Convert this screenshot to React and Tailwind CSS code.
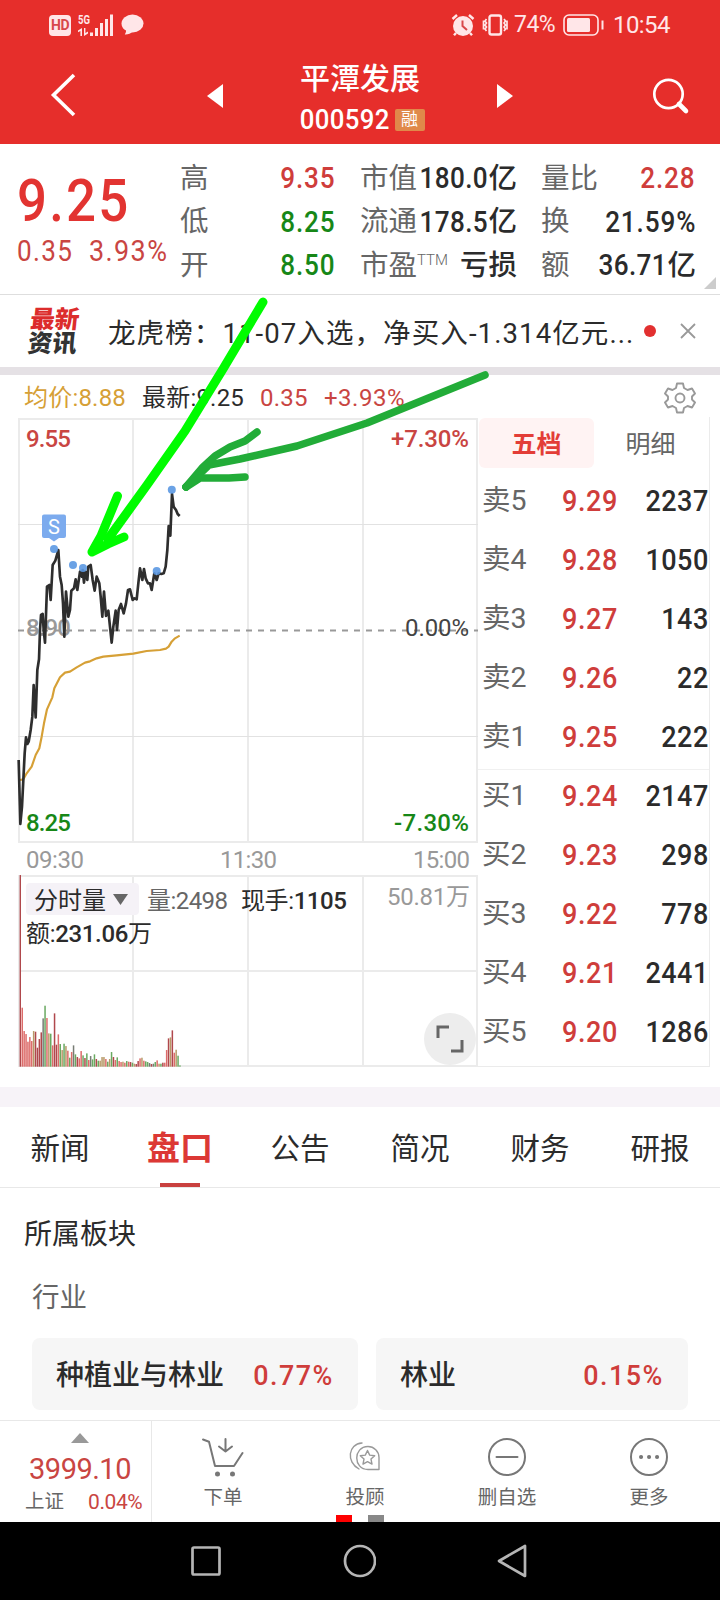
import React from "react";

const stats = [
  [
    { label: "高", value: "9.35", color: "text-[#cf3d3b]" },
    { label: "低", value: "8.25", color: "text-[#178717]" },
    { label: "开", value: "8.50", color: "text-[#178717]" },
  ],
  [
    { label: "市值", value: "180.0", unit: "亿", color: "text-[#2b2b2b]" },
    { label: "流通", value: "178.5", unit: "亿", color: "text-[#2b2b2b]" },
    { label: "市盈", sup: "TTM", unit: "亏损", color: "text-[#2b2b2b]" },
  ],
  [
    { label: "量比", value: "2.28", color: "text-[#cf3d3b]" },
    { label: "换", value: "21.59%", color: "text-[#2b2b2b]" },
    { label: "额", value: "36.71", unit: "亿", color: "text-[#2b2b2b]" },
  ],
];

const statWidths = ["w-[156px]", "w-[157px]", "w-[155px]"];

const orders = [
  ["卖5", "9.29", "2237"],
  ["卖4", "9.28", "1050"],
  ["卖3", "9.27", "143"],
  ["卖2", "9.26", "22"],
  ["卖1", "9.25", "222"],
  ["买1", "9.24", "2147"],
  ["买2", "9.23", "298"],
  ["买3", "9.22", "778"],
  ["买4", "9.21", "2441"],
  ["买5", "9.20", "1286"],
];

const tabs = ["新闻", "盘口", "公告", "简况", "财务", "研报"];

// chart data is kept at 3x, see the scale on the group that draws it
const pricePoints =
  "56,1170 61,1362 66,1310 70,1230 74,1150 78,1102 82,1122 86,1115 92,1080 97,1040 101,945 107,1042 112,900 117,868 120,780 123,735 128,732 131,780 135,818 141,650 148,645 152,690 158,585 166,572 175,540 180,620 185,645 189,700 193,800 198,665 205,740 210,720 214,662 222,655 227,628 232,660 240,605 246,620 248,600 252,638 256,605 262,630 265,590 272,585 278,630 284,662 290,620 298,640 302,680 307,740 312,665 318,738 325,722 330,770 335,818 340,770 347,722 351,780 356,720 363,702 371,730 378,700 384,660 390,658 398,690 404,685 410,688 415,640 420,595 427,630 432,597 437,625 444,640 450,640 455,660 463,610 470,630 476,610 484,612 491,610 497,590 502,540 506,468 511,497 516,372 521,410 528,420 533,432 539,438";

const avgPoints =
  "60,1230 70,1228 80,1210 95,1190 107,1155 118,1135 125,1100 132,1060 141,1018 157,982 163,955 180,922 195,908 210,905 230,892 255,878 270,874 290,865 310,860 350,856 400,851 440,843 480,840 498,836 506,830 515,815 525,805 539,797";

const dots = [[54, 549], [73, 565], [83, 568], [156.7, 571], [171.8, 489.7]];

const volumes = [
  575, 177, 107, 98, 75, 89, 77, 107, 105, 57, 83, 103, 145, 183, 146, 100, 99, 64, 160, 66, 97, 68, 50, 69, 62, 48, 27,
  44, 64, 37, 29, 25, 47, 34, 26, 40, 20, 32, 22, 37, 23, 18, 18, 29, 29, 23, 15, 23, 44, 29, 20, 28, 17, 14, 15, 12, 17,
  15, 14, 12, 9, 8, 17, 25, 27, 18, 16, 14, 11, 8, 9, 14, 19, 9, 9, 12, 12, 50, 85, 88, 109, 42, 51, 33, 4,
];
const barColors = "drrrrrroddddkgrogrddrgogorgrkgdrrgdgrkggdgooorgogdrgrrorgrdgoddrorggkdkgrogdrrdodrogg";
const barFill = { r: "#dd6c6a", d: "#b0484c", g: "#6aa961", o: "#b79a68", k: "#777c74" };

function StatusBar() {
  return (
    <div className="flex h-[50px] items-center pl-[49px] pr-[50px] text-[#ffe6e8]">
      <div className="flex h-[21px] w-[22px] items-center justify-center rounded-[4px] bg-[#ffe6e8] text-[14px] font-bold tracking-[-0.5px] text-[#d8484b]">
        HD
      </div>
      <svg className="ml-[7px] h-[24px] w-[36px]" viewBox="0 0 36 24" fill="currentColor">
        <text x="0" y="10.5" fontSize="12.5" fontWeight="700" textLength="12" lengthAdjust="spacingAndGlyphs">5G</text>
        <path d="M4 15v8H2.4v-5L0 19.2v-1.6zM6 15h1.4v5l2.6-1.4v1.8L6 23z" />
        <path d="M12 19.5h3V23h-3zM17 15h3v8h-3zM22 10h3v13h-3zM27 6h3v17h-3zM32 1.5h3V23h-3z" />
      </svg>
      <svg className="ml-[7px] h-[22px] w-[23px]" viewBox="0 0 23 22" fill="currentColor">
        <ellipse cx="11.5" cy="9.5" rx="11" ry="9" />
        <path d="M5 15c.3 2.500-.3 4-1.200 5.500 3 .2 6-.8 8-3z" />
      </svg>
      <div className="ml-auto flex items-center">
        <svg className="h-[24px] w-[24px]" viewBox="0 0 24 24">
          <circle cx="12" cy="13" r="10" fill="currentColor" />
          <path d="M1.500 6 6 2M22.500 6 18 2M5 20l-2 2.300M19 20l2 2.300" stroke="currentColor" strokeWidth="2.400" fill="none" />
          <path d="M11.500 7.500V13l4.500 4" stroke="#d8484b" strokeWidth="2" fill="none" />
        </svg>
        <svg className="ml-[6px] h-[24px] w-[28px]" viewBox="0 0 28 24" fill="none" stroke="currentColor">
          <rect x="8.500" y="2.500" width="11.500" height="19" rx="2" strokeWidth="2.400" />
          <path d="m5.500 6-1.500 2 1.500 2-1.500 2 1.500 2-1.500 2 1.500 2M2.500 7.500v9M23 6l1.500 2-1.500 2 1.500 2-1.500 2 1.500 2-1.500 2M26 7.500v9" strokeWidth="1.700" />
        </svg>
        <span className="ml-[5px] w-[45px] text-[23px] tracking-[-0.5px]">74%</span>
        <svg className="ml-[4px] h-[22px] w-[42px]" viewBox="0 0 42 22">
          <rect x="1" y="1" width="34" height="20" rx="5" fill="none" stroke="currentColor" strokeWidth="1.600" />
          <rect x="4" y="4" width="23" height="14" rx="1.500" fill="currentColor" />
          <path d="M38.500 6.500h2v9h-2z" fill="currentColor" />
        </svg>
        <span className="ml-[8px] w-[57px] text-[24px] tracking-[-0.600px]">10:54</span>
      </div>
    </div>
  );
}

function Header() {
  return (
    <header className="h-[144px] bg-[#e62e2b] text-white">
      <StatusBar />
      <div className="flex h-[94px] items-center">
        <svg className="-mt-[5px] ml-[50px] h-[44px] w-[26px]" viewBox="0 0 26 44" fill="none" stroke="currentColor" strokeWidth="3.600">
          <path d="M24 2 3.500 22 24 42" />
        </svg>
        <svg className="-mt-[2px] ml-[131px] h-[24px] w-[16px]" viewBox="0 0 16 24" fill="currentColor">
          <path d="M16 0v24L0 12z" />
        </svg>
        <div className="ml-[60px] flex w-[154px] flex-col items-center">
          <h1 className="h-[38px] text-[30px] font-medium leading-[38px]">平潭发展</h1>
          <div className="mt-[8px] flex h-[28px] items-center">
            <span className="w-[96px] origin-right scale-x-[.92] whitespace-nowrap text-[28px] font-medium leading-none tracking-[0.400px]">000592</span>
            <span className="ml-[7px] mr-[4px] flex h-[22px] w-[30px] items-center justify-center rounded-[2px] bg-[#e0894a] text-[17px]">
              融
            </span>
          </div>
        </div>
        <svg className="-mt-[2px] ml-[60px] h-[24px] w-[16px]" viewBox="0 0 16 24" fill="currentColor">
          <path d="M0 0v24l16-12z" />
        </svg>
        <svg className="-mt-[2px] ml-[139px] h-[38px] w-[38px]" viewBox="0 0 38 38" fill="none" stroke="currentColor">
          <circle cx="16.500" cy="17" r="14.200" strokeWidth="2.700" />
          <path d="m27 27 7 7" strokeWidth="4.600" strokeLinecap="round" />
        </svg>
      </div>
    </header>
  );
}

function Quote() {
  return (
    <section className="flex h-[151px] border-b border-[#dedede]">
      <div className="w-[180px] shrink-0 pl-[17px] pt-[27px]">
        <div className="h-[60px] origin-left scale-x-[.88] text-[60px] font-medium leading-[60px] tracking-[2.500px] text-[#e23431]">9.25</div>
        <div className="mt-[4px] flex gap-[9px] whitespace-nowrap text-[29px] leading-[32px] tracking-[1.500px] text-[#c94542]">
          <span className="origin-left scale-x-90">0.35</span>
          <span className="origin-left scale-x-[.93]">3.93%</span>
        </div>
      </div>
      <div className="flex gap-[24px] pt-[13px]">
        {stats.map((col, i) => (
          <div key={i} className={statWidths[i]}>
            {col.map((s) => (
              <div key={s.label} className="flex h-[43.500px] items-center whitespace-nowrap leading-none">
                <span className="flex text-[28.500px] text-[#666]">
                  {s.label}
                  {s.sup && <sup className="top-[1px] text-[15px] font-light leading-none">{s.sup}</sup>}
                </span>
                <span className={`-ml-4 flex flex-1 items-center justify-end text-[29px] font-medium ${s.color}`}>
                  {s.value && (
                    <span className={`origin-right scale-x-[.9] ${s.unit ? "tracking-[0.4px]" : "tracking-[1px]"}`}>{s.value}</span>
                  )}
                  {s.unit && <span className="text-[28.500px]">{s.unit}</span>}
                </span>
              </div>
            ))}
          </div>
        ))}
      </div>
      <svg className="ml-[8px] mt-[133px] h-[12px] w-[12px]" viewBox="0 0 12 12" fill="#ccc">
        <path d="M12 0v12H0z" />
      </svg>
    </section>
  );
}

function News() {
  return (
    <section className="flex h-[72px] items-center">
      <div className="ml-[29px] mt-[2px] w-[52px] -skew-x-6 text-[24.500px] font-black leading-[24px] text-[#333]">
        <div className="text-[#dc2c2c]">最新</div>
        <div>资讯</div>
      </div>
      <p className="ml-[27px] w-[530px] whitespace-nowrap pt-[5px] text-[27.500px] tracking-[1.100px] text-[#2b2b2b]">
        龙虎榜：11-07入选，净买入-1.314亿元...
      </p>
      <span className="ml-[6px] h-[12px] w-[12px] rounded-full bg-[#e23030]" />
      <svg className="ml-[24px] h-[16px] w-[16px]" viewBox="0 0 16 16" stroke="#999" strokeWidth="1.800">
        <path d="m1 1 14 14M15 1 1 15" />
      </svg>
    </section>
  );
}

function Chart() {
  return (
    <svg className="h-[660px] w-[478px] shrink-0" viewBox="0 416 478 660">
      {/* grid */}
      <g stroke="#ebebeb" strokeWidth="2" fill="none">
        <path d="M18 419h460M18 842h460M18 876h460M18 971h460M18 1066h460" />
        <path d="M19 418v424M133 418v424M248 418v424M363 418v424M477 418v424" />
        <path d="M19 876v190M133 876v190M248 876v190M363 876v190M477 876v190" />
        <path d="M18 524.500h460M18 736.500h460" strokeWidth="1" stroke="#e2e2e2" />
      </g>
      <path d="M18 630.500h460" stroke="#999" strokeWidth="2" strokeDasharray="6 6" />

      <g fontSize="24" fontWeight="500">
        <text x="26" y="447" fill="#c94542" textLength="45">9.55</text>
        <text x="26" y="635.500" fill="#999" textLength="45">8.90</text>
        <text x="26" y="831" fill="#178717" textLength="45">8.25</text>
        <text x="391" y="447" fill="#c94542" textLength="78">+7.30%</text>
        <text x="405" y="635.500" fill="#444" textLength="64" fontWeight="400">0.00%</text>
        <text x="394" y="831" fill="#178717" textLength="75">-7.30%</text>
      </g>
      <g fontSize="24" fill="#999">
        <text x="26" y="868" textLength="58">09:30</text>
        <text x="220" y="868" textLength="57">11:30</text>
        <text x="413" y="868" textLength="57">15:00</text>
        <text x="387" y="904.500" textLength="83">50.81万</text>
      </g>

      <rect x="26" y="883" width="113" height="32" rx="4" fill="#f5f2f7" />
      <path d="M113 894h15l-7.500 11z" fill="#666" />
      <g fontSize="24" fill="#2b2b2b">
        <text x="34" y="908.500" textLength="72">分时量</text>
        <text x="147" y="908.500" fill="#666" textLength="81">量:2498</text>
        <text x="241" y="908.500" textLength="106">现手:<tspan fontWeight="500">1105</tspan></text>
        <text x="26" y="941.500" textLength="126">额:<tspan fontWeight="500">231.06</tspan>万</text>
      </g>

      {volumes.map((v, i) => (
        <rect
          key={i}
          x={19.6 + i * 1.9}
          y={1066.700 - v / 3}
          width={i === 0 ? 1.4 : 1.5}
          height={v / 3}
          fill={barFill[barColors[i] || "g"]}
        />
      ))}

      <g transform="translate(0 370) scale(0.33333)" fill="none" strokeLinejoin="round">
        <polyline points={avgPoints} stroke="#d6a036" strokeWidth="6.500" />
        <polyline points={pricePoints} stroke="#2e2e2e" strokeWidth="8" />
      </g>

      <g fill="#5b98e2" fillOpacity="0.9">
        {dots.map(([x, y]) => (
          <circle key={x} cx={x} cy={y} r="4" />
        ))}
      </g>
      <path d="M44 514.500h20a2 2 0 0 1 2 2V536a2 2 0 0 1-2 2h-5l-5 3.500-5-3.500h-5a2 2 0 0 1-2-2v-19.500a2 2 0 0 1 2-2z" fill="#7cabee" />
      <text x="54" y="534" fontSize="20" fill="#fff" textAnchor="middle">S</text>

      <circle cx="450" cy="1039" r="26" fill="#ededed" />
      <path d="M438 1038v-11h11M462 1040v11h-11" fill="none" stroke="#666" strokeWidth="3" />
    </svg>
  );
}

function OrderBook() {
  return (
    <div className="mt-[1px] h-[650px] w-[232px] border-b border-r border-[#ebebeb]">
      <div className="flex h-[57px] pt-[1px]">
        <div className="ml-[1px] flex h-[50px] w-[115px] items-center justify-center rounded-[6px] bg-[#fff3f3] pt-[4px] text-[25px] font-bold text-[#e33d37]">
          五档
        </div>
        <div className="flex h-[50px] w-[113px] items-center justify-center pt-[4px] text-[25px] text-[#666]">明细</div>
      </div>
      {orders.map(([name, price, qty], i) => (
        <div
          key={name}
          className={`flex h-[59px] items-center pb-[6px] leading-none ${i === 5 ? "border-t border-[#f0f0f0]" : ""}`}
        >
          <span className="w-[84px] pl-[4px] pt-[1px] text-[28.500px] text-[#666]">{name}</span>
          <span className="origin-left scale-x-[.9] text-[30px] font-medium tracking-[0.700px] text-[#cf3d3b]">{price}</span>
          <span className="-ml-4 flex-1 origin-right scale-x-[.9] text-right text-[30px] font-medium tracking-[0.500px] text-[#2b2b2b]">
            {qty}
          </span>
        </div>
      ))}
    </div>
  );
}

function TimeShare() {
  return (
    <section className="h-[712px]">
      <div className="flex h-[41px] items-center whitespace-nowrap pl-[24px] pt-[4px] text-[24px] tracking-[0.2px]">
        <span className="w-[118px] text-[#d6a036]">均价:8.88</span>
        <span className="w-[118px] text-[#2b2b2b]">最新:9.25</span>
        <span className="w-[64px] text-[#c94542]">0.35</span>
        <span className="tracking-[0.5px] text-[#c94542]">+3.93%</span>
        <svg className="ml-auto mr-[24px] h-[32px] w-[32px]" viewBox="0 0 32 32" fill="none" stroke="#999" strokeWidth="1.900" strokeLinejoin="round">
          <path d="M13 1.500h6l1 4.500 3.500 2 4.500-1.500 3 5-3 3v3l3 3-3 5-4.500-1.500-3.500 2-1 4.500h-6l-1-4.500-3.500-2L4 25.500l-3-5 3-3v-3l-3-3 3-5L8.500 8 12 6z" />
          <circle cx="16" cy="16" r="4.500" />
        </svg>
      </div>
      <div className="flex">
        <Chart />
        <OrderBook />
      </div>
    </section>
  );
}

function Sectors() {
  return (
    <section className="h-[232px] pt-[26px]">
      <h2 className="pl-[24px] text-[28px] leading-[42px] text-[#2b2b2b]">所属板块</h2>
      <h3 className="mt-[21px] pl-[32px] text-[27.500px] leading-[42px] text-[#666]">行业</h3>
      <div className="mt-[19px] flex gap-[18px] pl-[32px] text-[28px] font-medium">
        <div className="flex h-[72px] w-[326px] items-center justify-between rounded-[8px] bg-[#f6f6f6] pl-[24px] pr-[24px] pt-[4px]">
          <span className="text-[#2b2b2b]">种植业与林业</span>
          <span className="origin-right scale-x-[.96] tracking-[1.500px] text-[#cf3d3b]">0.77%</span>
        </div>
        <div className="flex h-[72px] w-[312px] items-center justify-between rounded-[8px] bg-[#f6f6f6] pl-[24px] pr-[24px] pt-[4px]">
          <span className="text-[#2b2b2b]">林业</span>
          <span className="origin-right scale-x-[.96] tracking-[1.500px] text-[#cf3d3b]">0.15%</span>
        </div>
      </div>
    </section>
  );
}

const actions = [
  {
    label: "下单",
    icon: (
      <>
        <path d="m1 4.500 6 2.200L13 31H32l8.500-13" />
        <path d="M23.500 4v12.500m-6.500-5 6.500 5 6.500-5" />
        <circle cx="15.500" cy="39" r="1.500" fill="#777" />
        <circle cx="30.500" cy="39" r="1.500" fill="#777" />
      </>
    ),
  },
  {
    label: "投顾",
    icon: (
      <g strokeWidth="1.400" stroke="#999">
        <path d="M15 34C2 27 4 9 18 8M35 34.500H24c-15 0-15-23 0-23 6 0 11 5 11 11z" />
        <path d="m23.500 15.500 2.200 4.600 5 .6-3.700 3.400 1 5-4.500-2.500-4.500 2.500 1-5-3.700-3.400 5-.6z" />
      </g>
    ),
  },
  {
    label: "删自选",
    icon: (
      <>
        <circle cx="21" cy="22" r="18" />
        <path d="M10.500 22h21" />
      </>
    ),
  },
  {
    label: "更多",
    icon: (
      <>
        <circle cx="21" cy="22" r="18" />
        <path d="M13 22h.1M21 22h.1M29 22h.1" strokeWidth="4" />
      </>
    ),
  },
];

function BottomBar() {
  return (
    <footer className="relative flex h-[102px] border-t border-[#e8e8e8]">
      <div className="flex w-[152px] flex-col items-center border-r border-[#e8e8e8] pt-[12px]">
        <svg className="ml-[8px] h-[10px] w-[18px]" viewBox="0 0 18 10" fill="#999">
          <path d="M9 0l9 10H0z" />
        </svg>
        <div className="ml-[9px] mt-[9px] text-[29px] leading-[34px] tracking-[-0.5px] text-[#c94542]">3999.10</div>
        <div className="flex w-full items-center pl-[25px] pt-[1px] leading-[30px]">
          <span className="w-[63px] text-[19.500px] text-[#666]">上证</span>
          <span className="text-[21px] tracking-[-0.4px] text-[#c94542]">0.04%</span>
        </div>
      </div>
      {actions.map((a) => (
        <div key={a.label} className="flex w-[142px] flex-col items-center pt-[14px]">
          <svg className="h-[44px] w-[42px]" viewBox="0 0 42 44" fill="none" stroke="#777" strokeWidth="2" strokeLinecap="round" strokeLinejoin="round">
            {a.icon}
          </svg>
          <span className="mt-[6px] text-[19.500px] leading-[26px] text-[#666]">{a.label}</span>
        </div>
      ))}
      {/* page marks */}
      <span className="absolute bottom-0 left-[336px] h-[7px] w-[16px] bg-[#fe0000]" />
      <span className="absolute bottom-0 left-[368px] h-[7px] w-[16px] bg-[#888]" />
    </footer>
  );
}

function SystemNav() {
  return (
    <nav className="flex h-[78px] items-center gap-[121px] bg-black pl-[189px] text-[#b5b5b5]">
      <svg className="h-[34px] w-[34px]" viewBox="0 0 34 34" fill="none" stroke="currentColor" strokeWidth="2.700">
        <rect x="3.500" y="3.500" width="27" height="27" rx="1.500" />
      </svg>
      <svg className="-ml-[2px] h-[34px] w-[34px]" viewBox="0 0 34 34" fill="none" stroke="currentColor" strokeWidth="2.700">
        <circle cx="18" cy="17" r="15" />
      </svg>
      <svg className="-ml-[2px] h-[34px] w-[34px]" viewBox="0 0 34 34" fill="none" stroke="currentColor" strokeWidth="2.700" strokeLinejoin="round">
        <path d="M30 2v30L4 17z" />
      </svg>
    </nav>
  );
}

// hand drawn arrows over the chart
function Marks() {
  return (
    <svg className="pointer-events-none absolute left-0 top-0 h-[1600px] w-[720px]" viewBox="0 0 720 1600" fill="none" strokeLinecap="round" strokeLinejoin="round">
      <g stroke="#22ac38" strokeWidth="7.500">
        <path d="M485 375 367 423 297 446 240 459 209 465 186 487" />
        <path d="m257 432-12 9-15 6-15 9-12 11-17 20" />
        <path d="m245 477-16 1-29 0-14 9" />
      </g>
      <g stroke="#00fc00" strokeWidth="9">
        <path d="m263 302-40 67-38 62-38 54-39 54" />
        <path d="M117.500 496 101 536l-9 16 16-8 16-7" />
      </g>
    </svg>
  );
}

export default function App() {
  return (
    <div className="relative h-[1600px] w-[720px] overflow-hidden bg-white font-['Roboto','Noto_Sans_CJK_SC',sans-serif]">
      <Header />
      <Quote />
      <News />
      <div className="h-[8px] bg-[#e5e1e5]" />
      <TimeShare />
      <div className="h-[20px] bg-[#f7f3f8]" />
      <div className="flex h-[81px] border-b border-[#e8e8e8]">
        {tabs.map((t) =>
          t === "盘口" ? (
            <div key={t} className="flex w-[120px] flex-col items-center text-[33px] font-bold text-[#dc3835]">
              <span className="h-[76px] leading-[84px]">{t}</span>
              <span className="h-[4px] w-[40px] bg-[#c9403f]" />
            </div>
          ) : (
            <div key={t} className="w-[120px] text-center text-[29.500px] leading-[84px] text-[#2b2b2b]">
              {t}
            </div>
          )
        )}
      </div>
      <Sectors />
      <BottomBar />
      <SystemNav />
      <Marks />
    </div>
  );
}
